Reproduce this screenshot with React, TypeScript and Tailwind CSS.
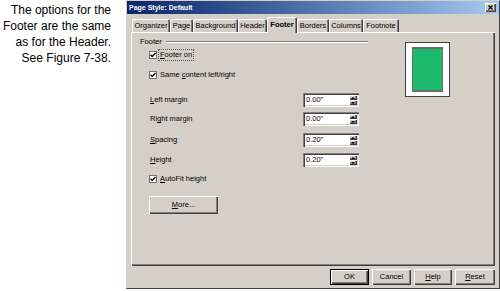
import React from "react";

const raised =
  "shadow-[inset_1px_1px_0_#ffffff,inset_-1px_-1px_0_#404040,inset_-2px_-2px_0_#808080]";
const sunken =
  "shadow-[inset_1px_1px_0_#808080,inset_2px_2px_0_#404040,inset_-1px_-1px_0_#ffffff,inset_-2px_-2px_0_#d4d0c8]";

const tabs = [
  { label: "Organizer", cls: "w-[38px]" },
  { label: "Page", cls: "w-[23px]" },
  { label: "Background", cls: "w-[45px]" },
  { label: "Header", cls: "w-[29px]" },
  { label: "Footer", cls: "w-[30px]", active: true },
  { label: "Borders", cls: "w-[32px]" },
  { label: "Columns", cls: "w-[34px]" },
  { label: "Footnote", cls: "w-[36px]" },
];

function Check() {
  return (
    <div className="w-[8px] h-[8px] bg-white border border-[#707070] flex items-center justify-center shrink-0">
      <svg width="6" height="6" viewBox="0 0 6 6">
        <polyline points="0.5,2.8 2.2,4.5 5.5,1" fill="none" stroke="#000" strokeWidth="1.3" />
      </svg>
    </div>
  );
}

function CheckRow({ children, focus }: { children: React.ReactNode; focus?: boolean }) {
  return (
    <div className="flex items-center h-[12px] pl-[9px] gap-[2px]">
      <Check />
      <span
        className={
          "px-[1px] leading-[10px] " +
          (focus ? "outline outline-1 outline-dotted outline-[#555]" : "")
        }
      >
        {children}
      </span>
    </div>
  );
}

function Spin({ value }: { value: string }) {
  return (
    <div className={"w-[56px] h-[14px] bg-white flex items-center relative " + sunken}>
      <span className="pl-[3px] leading-none">{value}</span>
      <div className="absolute right-[2px] top-[2px] bottom-[2px] w-[8px] flex flex-col">
        <div className={"flex-1 bg-[#d4d0c8] flex items-center justify-center " + raised}>
          <svg width="4" height="2" viewBox="0 0 4 2">
            <polygon points="0,2 2,0 4,2" fill="#000" />
          </svg>
        </div>
        <div className={"flex-1 bg-[#d4d0c8] flex items-center justify-center " + raised}>
          <svg width="4" height="2" viewBox="0 0 4 2">
            <polygon points="0,0 4,0 2,2" fill="#000" />
          </svg>
        </div>
      </div>
    </div>
  );
}

function FieldRow({ label, value }: { label: React.ReactNode; value: string }) {
  return (
    <div className="flex items-center h-[14px] pl-[10px]">
      <div className="w-[153px] leading-none">{label}</div>
      <Spin value={value} />
    </div>
  );
}

function Btn({ children, cls, def }: { children: React.ReactNode; cls: string; def?: boolean }) {
  return (
    <div
      className={
        "bg-[#d4d0c8] flex items-center justify-center leading-none " +
        cls +
        " " +
        (def
          ? "shadow-[inset_0_0_0_1px_#000000,inset_2px_2px_0_#ffffff,inset_-2px_-2px_0_#404040,inset_-3px_-3px_0_#808080]"
          : raised)
      }
    >
      {children}
    </div>
  );
}

export default function App() {
  return (
    <div className="w-[500px] h-[291px] bg-white flex font-['Liberation_Sans',Arial,sans-serif] text-black overflow-hidden">
      <div className="w-[126px] shrink-0 pr-[15px] pt-[2px] text-right text-[12px] leading-[16px]">
        <div>The options for the</div>
        <div>Footer are the same</div>
        <div>as for the Header.</div>
        <div>See Figure 7-38.</div>
      </div>

      <div className="w-[374px] h-[289px] bg-[#d4d0c8] border-l border-t border-[#d4d0c8] border-r border-b border-r-[#404040] border-b-[#404040] flex flex-col text-[7.5px]">
        {/* title bar */}
        <div className="h-[13px] bg-gradient-to-r from-[#0a246a] to-[#a6caf0] flex items-center justify-between pl-[2px] pr-[3px]">
          <span className="text-white font-bold text-[7px] leading-none">Page Style: Default</span>
          <div className={"w-[11px] h-[9px] bg-[#d4d0c8] flex items-center justify-center " + raised}>
            <svg width="5" height="5" viewBox="0 0 5 5">
              <path d="M0.5 0.5 L4.5 4.5 M4.5 0.5 L0.5 4.5" stroke="#000" strokeWidth="1.3" />
            </svg>
          </div>
        </div>

        {/* tabs */}
        <div className="mt-[3px] h-[15px] flex items-end pl-[5px]">
          {tabs.map((t) => (
            <div
              key={t.label}
              className={
                "flex items-center justify-center leading-none rounded-t-[2px] bg-[#d4d0c8] shadow-[inset_1px_1px_0_#ffffff,inset_-1px_0_0_#404040,inset_-2px_0_0_#808080] " +
                t.cls +
                " " +
                (t.active ? "h-[16px] -mb-[1px] relative z-10 font-bold pb-[1px]" : "h-[13px]")
              }
            >
              {t.label}
            </div>
          ))}
        </div>

        {/* panel */}
        <div className={"mx-[4px] h-[234px] flex pt-[4px] pl-[1px] " + raised}>
          <div className="w-[273px] shrink-0 pl-[8px] flex flex-col">
            <div className="w-[228px] h-[12px] flex items-center gap-[4px]">
              <span className="leading-none">Footer</span>
              <div className="flex-1 h-[2px] border-t border-[#808080] border-b border-b-white" />
            </div>
            <div className="mt-[1px]">
              <CheckRow focus>
                <span className="underline">F</span>ooter on
              </CheckRow>
            </div>
            <div className="mt-[8px]">
              <CheckRow>
                Same <span className="underline">c</span>ontent left/right
              </CheckRow>
            </div>
            <div className="mt-[12px]">
              <FieldRow
                label={
                  <>
                    <span className="underline">L</span>eft margin
                  </>
                }
                value={'0.00"'}
              />
            </div>
            <div className="mt-[5px]">
              <FieldRow
                label={
                  <>
                    Ri<span className="underline">g</span>ht margin
                  </>
                }
                value={'0.00"'}
              />
            </div>
            <div className="mt-[7px]">
              <FieldRow
                label={
                  <>
                    <span className="underline">S</span>pacing
                  </>
                }
                value={'0.20"'}
              />
            </div>
            <div className="mt-[6px]">
              <FieldRow
                label={
                  <>
                    <span className="underline">H</span>eight
                  </>
                }
                value={'0.20"'}
              />
            </div>
            <div className="mt-[6px]">
              <CheckRow>
                <span className="underline">A</span>utoFit height
              </CheckRow>
            </div>
            <div className="mt-[11px] pl-[9px]">
              <Btn cls="w-[69px] h-[18px]">
                <span>
                  <span className="underline">M</span>ore...
                </span>
              </Btn>
            </div>
          </div>

          {/* preview */}
          <div className="mt-[6px] w-[45px] h-[55px] bg-white border border-[#404040] px-[6px] pt-[4px]">
            <div className="w-[31px] h-[45px] bg-[#1dba6e] border border-[#6b6b6b] border-t-[2px] border-b-[2px]" />
          </div>
        </div>

        {/* buttons */}
        <div className="mt-[3px] h-[16px] flex justify-end gap-[3px] pr-[4px]">
          <Btn cls="w-[39px] h-[16px]" def>
            OK
          </Btn>
          <Btn cls="w-[39px] h-[16px]">Cancel</Btn>
          <Btn cls="w-[38px] h-[16px]">
            <span>
              <span className="underline">H</span>elp
            </span>
          </Btn>
          <Btn cls="w-[40px] h-[16px]">
            <span>
              <span className="underline">R</span>eset
            </span>
          </Btn>
        </div>
      </div>
    </div>
  );
}
